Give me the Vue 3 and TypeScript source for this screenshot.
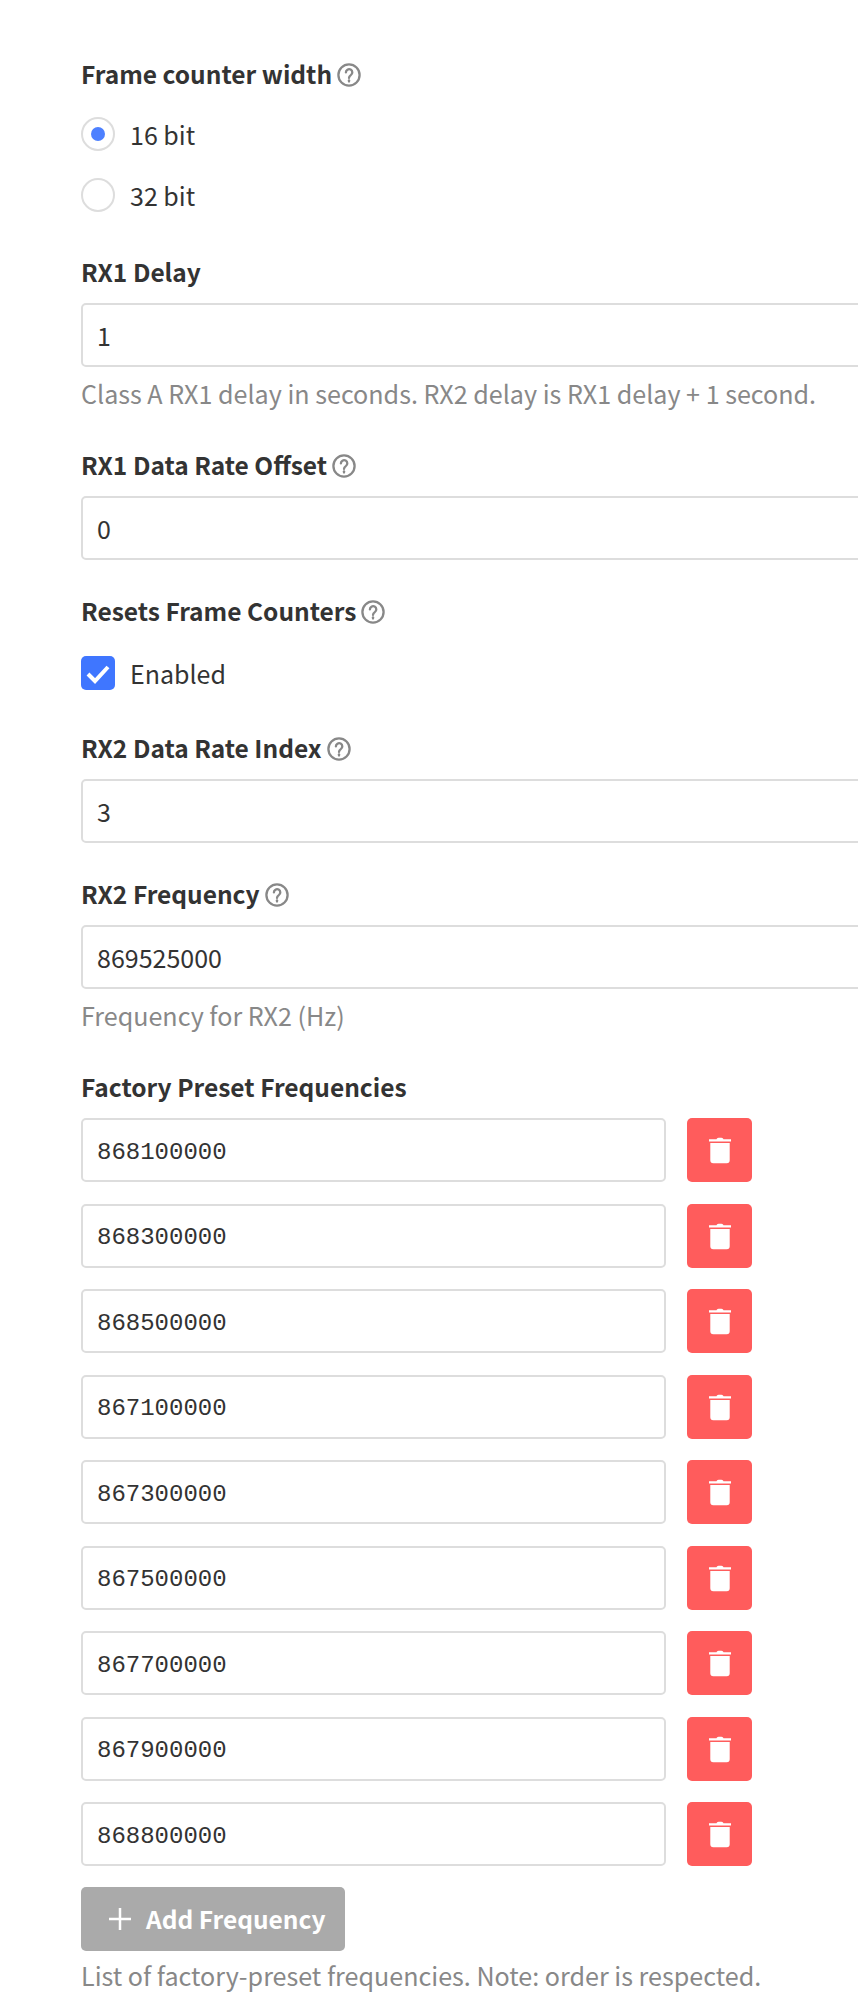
<script setup lang="ts">
const frequencies: string[] = [
  '868100000', '868300000', '868500000', '867100000', '867300000',
  '867500000', '867700000', '867900000', '868800000',
]
</script>

<template>
  <main class="page">
    <form class="form" @submit.prevent>
      <div class="field">
        <label class="label"><span>Frame counter width</span>
          <svg class="hint" viewBox="0 0 24 24"><circle cx="12" cy="12" r="10.6" /><path d="M8.900 9.400a3.200 3.200 0 1 1 4.900 2.700c-1.200.8-1.800 1.400-1.800 2.800" /><path d="M12 17.300v1.300" /></svg>
        </label>
        <div class="choices">
          <div class="choice"><span class="radio on"></span><span>16 bit</span></div>
          <div class="choice"><span class="radio"></span><span>32 bit</span></div>
        </div>
      </div>

      <div class="field">
        <label class="label"><span>RX1 Delay</span></label>
        <input class="input" value="1" readonly />
        <p class="help">Class A RX1 delay in seconds. RX2 delay is RX1 delay + 1 second.</p>
      </div>

      <div class="field">
        <label class="label"><span>RX1 Data Rate Offset</span>
          <svg class="hint" viewBox="0 0 24 24"><circle cx="12" cy="12" r="10.6" /><path d="M8.900 9.400a3.200 3.200 0 1 1 4.900 2.700c-1.200.8-1.800 1.400-1.800 2.800" /><path d="M12 17.300v1.300" /></svg>
        </label>
        <input class="input" value="0" readonly />
      </div>

      <div class="field">
        <label class="label"><span>Resets Frame Counters</span>
          <svg class="hint" viewBox="0 0 24 24"><circle cx="12" cy="12" r="10.6" /><path d="M8.900 9.400a3.200 3.200 0 1 1 4.900 2.700c-1.200.8-1.800 1.400-1.800 2.800" /><path d="M12 17.300v1.300" /></svg>
        </label>
        <div class="choices check-group">
          <div class="choice">
            <span class="check"><svg viewBox="0 0 34 34"><path d="M7 18l7 7L27 11" /></svg></span>
            <span>Enabled</span>
          </div>
        </div>
      </div>

      <div class="field">
        <label class="label"><span>RX2 Data Rate Index</span>
          <svg class="hint" viewBox="0 0 24 24"><circle cx="12" cy="12" r="10.6" /><path d="M8.900 9.400a3.200 3.200 0 1 1 4.900 2.700c-1.200.8-1.800 1.400-1.800 2.800" /><path d="M12 17.300v1.300" /></svg>
        </label>
        <input class="input" value="3" readonly />
      </div>

      <div class="field">
        <label class="label"><span>RX2 Frequency</span>
          <svg class="hint" viewBox="0 0 24 24"><circle cx="12" cy="12" r="10.6" /><path d="M8.900 9.400a3.200 3.200 0 1 1 4.900 2.700c-1.200.8-1.800 1.400-1.800 2.800" /><path d="M12 17.300v1.300" /></svg>
        </label>
        <input class="input" value="869525000" readonly />
        <p class="help">Frequency for RX2 (Hz)</p>
      </div>

      <div class="field">
        <label class="label"><span>Factory Preset Frequencies</span></label>
        <div class="rows">
          <div v-for="f in frequencies" :key="f" class="row">
            <input class="input mono" :value="f" readonly />
            <button type="button" class="del" aria-label="Delete">
              <svg viewBox="0 0 22 28"><path d="M0 3.200h7.500C8 2 9 1.700 11 1.700s3 .3 3.500 1.500H22v2.200H0z" /><path d="M1.300 7h19.400v17.200a3 3 0 0 1-3 3H4.300a3 3 0 0 1-3-3z" /></svg>
            </button>
          </div>
        </div>
        <button type="button" class="add">
          <svg viewBox="0 0 22 22"><path d="M11 0v22M0 11h22" /></svg>
          <span>Add Frequency</span>
        </button>
        <p class="help tight">List of factory-preset frequencies. Note: order is respected.</p>
      </div>
    </form>
  </main>
</template>

<style scoped>
.page {
  width: 858px;
  height: 2000px;
  overflow: hidden;
  background: #fff;
  box-sizing: border-box;
  padding: 57px 0 0 81px;
  color: #333;
  font-family: "Noto Sans CJK SC", "Noto Sans", sans-serif;
  font-size: 25px;
  line-height: 36px;
}
.form {
  width: 840px;
}
.field {
  margin-bottom: 34px;
}
.label {
  display: flex;
  align-items: center;
  gap: 5px;
  height: 36px;
  margin-bottom: 12px;
  font-weight: 600;
  font-size: 24.5px;
}
.label span {
  position: relative;
  top: -1px;
}
.hint {
  width: 24px;
  height: 24px;
  flex: none;
  fill: none;
  stroke: #888;
  stroke-width: 2.300;
  stroke-linecap: round;
}
.choices {
  display: flex;
  flex-direction: column;
  gap: 25px;
  margin: 23px 0 42px;
}
.check-group {
  margin: 25px 0 40px;
}
.choice {
  display: flex;
  align-items: center;
  gap: 15px;
  height: 36px;
}
.radio {
  box-sizing: border-box;
  width: 34px;
  height: 34px;
  border: 2px solid #ddd;
  border-radius: 50%;
  display: flex;
  align-items: center;
  justify-content: center;
}
.radio.on::after {
  content: "";
  width: 14px;
  height: 14px;
  border-radius: 50%;
  background: #4d80ff;
}
.check {
  width: 34px;
  height: 34px;
  border-radius: 5px;
  background: #3f76ff;
}
.check svg {
  display: block;
  width: 34px;
  height: 34px;
  fill: none;
  stroke: #fff;
  stroke-width: 4;
}
.input {
  display: block;
  box-sizing: border-box;
  width: 100%;
  height: 64px;
  padding: 0 14px 1px;
  border: 2px solid #ddd;
  border-radius: 5px;
  background: #fff;
  color: #333;
  font: inherit;
  outline: none;
}
.input.mono {
  padding: 4px 14px 0;
  font-family: "Liberation Mono", monospace;
  font-size: 24px;
}
.help {
  margin: 8px 0 37px;
  color: #888;
  font-size: 25.1px;
}
.rows {
  display: flex;
  flex-direction: column;
  gap: 21.5px;
}
.row {
  display: flex;
  gap: 21px;
  width: 671px;
}
.row .input {
  flex: 1;
  min-width: 0;
}
.del {
  flex: none;
  width: 65px;
  height: 64px;
  padding: 0;
  border: 0;
  border-radius: 5px;
  background: #ff5c5c;
  display: flex;
  align-items: center;
  justify-content: center;
}
.del svg {
  width: 22px;
  height: 28px;
  fill: #fff;
}
.add {
  display: flex;
  align-items: center;
  gap: 15px;
  height: 64px;
  width: 264px;
  margin-top: 21px;
  padding: 0 0 0 28px;
  border: 0;
  border-radius: 5px;
  background: #aaa;
  color: #fff;
  font: inherit;
  font-weight: 600;
  font-size: 24.5px;
}
.add svg {
  width: 22px;
  height: 22px;
  fill: none;
  stroke: #fff;
  stroke-width: 2.500;
}
.help.tight {
  margin: 6px 0 0;
}
</style>
